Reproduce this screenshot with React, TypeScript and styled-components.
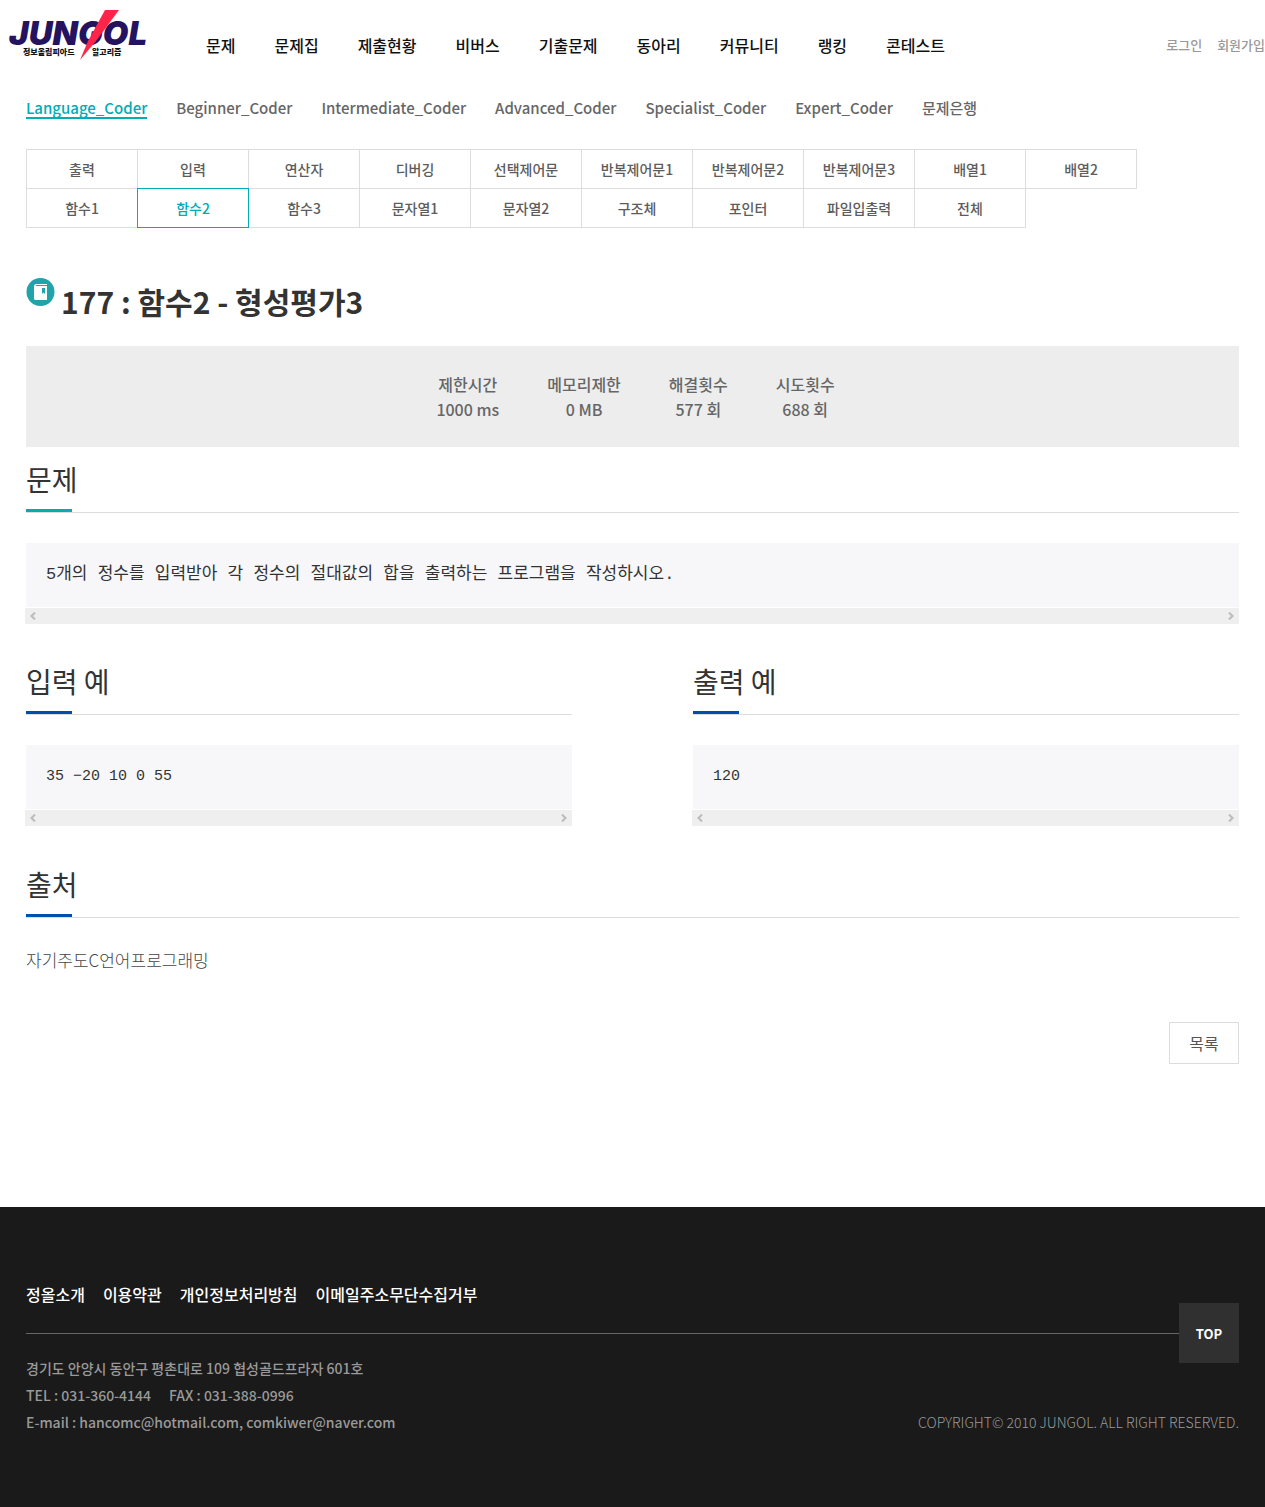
import React from "react";
import styled, { createGlobalStyle } from "styled-components";

const teal = "#00adb5";
const blue = "#004eb3";
const sans = `"Noto Sans CJK KR", "Noto Sans", sans-serif`;

const GlobalStyle = createGlobalStyle`
  * { box-sizing: border-box; }
  body { margin: 0; background: #fff; color: #555; font: 500 16px/24px ${sans}; }
  h1, h2, p, ul, dl, dd, pre { margin: 0; padding: 0; }
  ul { list-style: none; }
  a { color: inherit; text-decoration: none; }
`;

const Header = styled.header`
  display: flex;
  align-items: flex-start;
  height: 90px;
`;
const LogoLink = styled.a`
  display: block;
  width: 152px;
  height: 68px;
  margin-right: 54px;
`;
const MainNav = styled.nav`
  flex: 1;
  padding-top: 33px;
`;
const NavList = styled.ul<{ $gap: number }>`
  display: flex;
  gap: ${(p) => p.$gap}px;
`;
const MainNavLink = styled.a`
  color: #111;
`;
const Account = styled.div`
  display: flex;
  gap: 15px;
  padding-top: 33px;
  font-size: 13px;
  color: #999;
`;

const Content = styled.main`
  padding: 6px 26px 0;
`;
const LevelLink = styled.a<{ $active?: boolean }>`
  display: block;
  padding-top: 2px;
  line-height: 19px;
  border-bottom: 2px solid ${(p) => (p.$active ? teal : "transparent")};
  color: ${(p) => (p.$active ? teal : "#666")};
  font-size: 15px;
`;
const TopicGrid = styled.ul`
  display: flex;
  flex-wrap: wrap;
  max-width: 1120px;
  margin-top: 30px;
  padding: 0 0 1px 1px;
`;
const TopicLink = styled.a<{ $active?: boolean }>`
  display: block;
  position: relative;
  z-index: ${(p) => (p.$active ? 1 : 0)};
  width: 112px;
  height: 40px;
  margin: 0 0 -1px -1px;
  border: 1px solid ${(p) => (p.$active ? teal : "#ddd")};
  color: ${(p) => (p.$active ? teal : "#5c5c5c")};
  font-size: 14px;
  line-height: 38px;
  text-align: center;
`;
const TitleRow = styled.div`
  display: flex;
  align-items: flex-start;
  gap: 6px;
  margin-top: 50px;
`;
const Title = styled.h1`
  color: #333;
  font-size: 30px;
  font-weight: 700;
  line-height: 46px;
`;
const Stats = styled.dl`
  display: flex;
  justify-content: center;
  gap: 48px;
  margin-top: 22px;
  padding: 26px 20px 25px 26px;
  background: #ededed;
  line-height: 25px;
  color: #666;
  text-align: center;
`;
const Section = styled.section<{ $top: number }>`
  flex: 1;
  padding-top: ${(p) => p.$top}px;
`;
const SectionTitle = styled.h2<{ $color: string }>`
  height: 50px;
  border-bottom: 1px solid #ddd;
  color: #333;
  font-size: 28px;
  font-weight: 400;
  line-height: 32px;
  &::after {
    content: "";
    display: block;
    width: 46px;
    height: 3px;
    margin-top: 14px;
    background: ${(p) => p.$color};
  }
`;
const Code = styled.pre<{ $size: number }>`
  height: 65px;
  margin-top: 30px;
  padding: 20px;
  border-bottom: 1px solid #fff;
  background: #f7f7f9;
  color: #333;
  font-family: "Liberation Mono", "Noto Sans CJK KR", monospace;
  font-size: ${(p) => p.$size}px;
  font-weight: 400;
  line-height: 24px;
`;
const Track = styled.div`
  display: flex;
  justify-content: space-between;
  align-items: center;
  height: 16px;
  margin-left: -1px;
  padding: 0 5px;
  background: #efefef;
`;
const Pair = styled.div`
  display: flex;
  gap: 121px;
`;
const Source = styled.p`
  margin-top: 30px;
  color: #444;
  font-size: 17px;
  font-weight: 300;
  line-height: 24px;
`;
const Actions = styled.div`
  display: flex;
  justify-content: flex-end;
  margin: 50px 0 143px;
`;
const ListButton = styled.button`
  width: 70px;
  height: 42px;
  padding: 0;
  border: 1px solid #ddd;
  background: #fff;
  color: #555;
  font: 400 16px/24px ${sans};
`;

const Footer = styled.footer`
  min-height: 300px;
  padding: 75px 26px 71px;
  background: #1a1a1a;
  color: #999;
  font-size: 14px;
`;
const FooterLink = styled.a`
  color: #fff;
  font-size: 16px;
`;
const Divider = styled.div`
  display: flex;
  align-items: center;
  height: 60px;
  margin: -4px 0 -8px;
  &::before {
    content: "";
    flex: 1;
    height: 1px;
    background: #666;
  }
`;
const TopButton = styled.button`
  width: 60px;
  height: 60px;
  padding: 2px 0 0;
  border: 0;
  background: #303030;
  color: #fff;
  font: 700 13px/20px ${sans};
`;
const Contact = styled.div`
  display: flex;
  justify-content: space-between;
  align-items: flex-end;
  line-height: 27px;
`;
const Phones = styled.p`
  display: flex;
  gap: 18px;
`;
const Copyright = styled.p`
  font-weight: 300;
`;

function Logo() {
  return (
    <svg width="152" height="68" viewBox="0 0 152 68" role="img" aria-label="JUNGOL">
      <text x="9" y="45" fontFamily="Inter, sans-serif" fontSize="33" fontWeight="900" fontStyle="italic" fill="#24135f">JUNGOL</text>
      <text x="23" y="55" fontFamily="Noto Sans CJK KR, sans-serif" fontSize="8" fontWeight="900" fill="#111">정보올림피아드</text>
      <text x="92" y="55" fontFamily="Noto Sans CJK KR, sans-serif" fontSize="8" fontWeight="900" fill="#111">알고리즘</text>
      <path d="M105 10h14L96 41L80 60l8-19z" fill="#ff2448" />
    </svg>
  );
}

function BookIcon() {
  return (
    <svg width="29" height="29" viewBox="0 0 29 29" aria-hidden="true">
      <circle cx="14.5" cy="14" r="14" fill="#20a3ab" />
      <path d="M8 8.500Q8 6 10.500 6H21v1H10q-1 .5 0 1h11v14H9.500Q8 22 8 20.500z" fill="#fff" />
      <path d="M16 10h3v6l-1.500-1.500L16 16z" fill="#20a3ab" />
    </svg>
  );
}

function Chevron({ right }: { right?: boolean }) {
  return (
    <svg width="6" height="8" viewBox="0 0 6 8" aria-hidden="true">
      <path d={right ? "M1 .5L4.500 4L1 7.500" : "M5 .5L1.500 4L5 7.500"} fill="none" stroke="#bbb" strokeWidth="2" />
    </svg>
  );
}

function CodeBlock({ children, size }: { children: string; size: number }) {
  return (
    <>
      <Code $size={size}>{children}</Code>
      <Track>
        <Chevron />
        <Chevron right />
      </Track>
    </>
  );
}

const menu = ["문제", "문제집", "제출현황", "비버스", "기출문제", "동아리", "커뮤니티", "랭킹", "콘테스트"];
const levels = ["Language_Coder", "Beginner_Coder", "Intermediate_Coder", "Advanced_Coder", "Specialist_Coder", "Expert_Coder", "문제은행"];
const topics = ["출력", "입력", "연산자", "디버깅", "선택제어문", "반복제어문1", "반복제어문2", "반복제어문3", "배열1", "배열2", "함수1", "함수2", "함수3", "문자열1", "문자열2", "구조체", "포인터", "파일입출력", "전체"];
const stats = [["제한시간", "1000 ms"], ["메모리제한", "0 MB"], ["해결횟수", "577 회"], ["시도횟수", "688 회"]];
const policies = ["정올소개", "이용약관", "개인정보처리방침", "이메일주소무단수집거부"];

export default function App() {
  return (
    <>
      <GlobalStyle />
      <Header id="top">
        <LogoLink href="#"><Logo /></LogoLink>
        <MainNav>
          <NavList $gap={39}>
            {menu.map((m) => <li key={m}><MainNavLink href="#">{m}</MainNavLink></li>)}
          </NavList>
        </MainNav>
        <Account>
          <a href="#">로그인</a>
          <a href="#">회원가입</a>
        </Account>
      </Header>
      <Content>
        <nav>
          <NavList $gap={29}>
            {levels.map((l, i) => <li key={l}><LevelLink href="#" $active={i === 0}>{l}</LevelLink></li>)}
          </NavList>
          <TopicGrid>
            {topics.map((t) => <li key={t}><TopicLink href="#" $active={t === "함수2"}>{t}</TopicLink></li>)}
          </TopicGrid>
        </nav>
        <TitleRow>
          <BookIcon />
          <Title>177 : 함수2 - 형성평가3</Title>
        </TitleRow>
        <Stats>
          {stats.map(([k, v]) => <div key={k}><dt>{k}</dt><dd>{v}</dd></div>)}
        </Stats>
        <Section $top={16}>
          <SectionTitle $color={teal}>문제</SectionTitle>
          <CodeBlock size={17}>5개의 정수를 입력받아 각 정수의 절대값의 합을 출력하는 프로그램을 작성하시오.</CodeBlock>
        </Section>
        <Pair>
          <Section $top={41}>
            <SectionTitle $color={blue}>입력 예</SectionTitle>
            <CodeBlock size={15}>35 −20 10 0 55</CodeBlock>
          </Section>
          <Section $top={41}>
            <SectionTitle $color={blue}>출력 예</SectionTitle>
            <CodeBlock size={15}>120</CodeBlock>
          </Section>
        </Pair>
        <Section $top={42}>
          <SectionTitle $color={blue}>출처</SectionTitle>
          <Source>자기주도C언어프로그래밍</Source>
        </Section>
        <Actions><ListButton type="button">목록</ListButton></Actions>
      </Content>
      <Footer>
        <NavList $gap={18}>
          {policies.map((p) => <li key={p}><FooterLink href="#">{p}</FooterLink></li>)}
        </NavList>
        <Divider><TopButton type="button" onClick={() => window.scrollTo(0, 0)}>TOP</TopButton></Divider>
        <Contact>
          <div>
            <p>경기도 안양시 동안구 평촌대로 109 협성골드프라자 601호</p>
            <Phones><span>TEL : 031-360-4144</span><span>FAX : 031-388-0996</span></Phones>
            <p>E-mail : hancomc@hotmail.com, comkiwer@naver.com</p>
          </div>
          <Copyright>COPYRIGHT© 2010 JUNGOL. ALL RIGHT RESERVED.</Copyright>
        </Contact>
      </Footer>
    </>
  );
}
